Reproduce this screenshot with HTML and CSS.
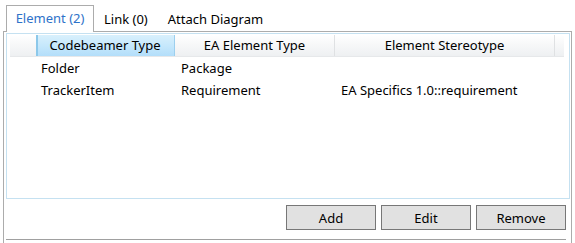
FILE: index.html
```html
<!DOCTYPE html>
<html>
<head>
<meta charset="utf-8">
<link rel="stylesheet" href="styles.css">
</head>
<body>
<div class="tabs">
  <div class="tab active">Element (2)</div>
  <div class="tab">Link (0)</div>
  <div class="tab">Attach Diagram</div>
</div>
<div class="panel">
  <div class="list">
    <div class="head">
      <div class="hc c0"></div>
      <div class="hc c1 sel">Codebeamer Type</div>
      <div class="hc c2">EA Element Type</div>
      <div class="hc c3">Element Stereotype</div>
      <div class="hc c4"></div>
    </div>
    <div class="row">
      <div class="c0"></div>
      <div class="cell c1">Folder</div>
      <div class="cell c2">Package</div>
      <div class="cell c3"></div>
    </div>
    <div class="row">
      <div class="c0"></div>
      <div class="cell c1">TrackerItem</div>
      <div class="cell c2">Requirement</div>
      <div class="cell c3">EA Specifics 1.0::requirement</div>
    </div>
  </div>
  <div class="buttons">
    <button class="btn">Add</button>
    <button class="btn">Edit</button>
    <button class="btn">Remove</button>
  </div>
  <div class="sep"></div>
</div>
</body>
</html>
```
FILE: styles.css
```css
html, body {
  margin: 0;
  padding: 0;
  background: #fff;
}
body {
  font-family: "Noto Sans", "Open Sans", sans-serif;
  font-size: 13px;
  color: #000;
  width: 575px;
  height: 243px;
  overflow: hidden;
}
.tabs {
  display: flex;
  align-items: flex-end;
  height: 31px;
  padding-left: 6px;
  position: relative;
  z-index: 1;
}
.tab {
  height: 24px;
  line-height: 24px;
  padding: 0 10px;
  white-space: nowrap;
}
.tab.active {
  height: 26px;
  line-height: 24px;
  margin-bottom: -1px;
  width: 86px;
  padding: 0;
  text-align: center;
  border: 1px solid #acacac;
  border-bottom: none;
  background: #fff;
  color: #2e72c9;
}
.tab:nth-child(2) { padding: 0 10px 0 10px; }
.panel {
  margin-left: 3px;
  width: 565px;
  height: 211px;
  border: 1px solid #acacac;
  border-bottom: none;
  padding: 1px 0 0 2px;
  box-sizing: content-box;
}
.list {
  width: 559px;
  height: 163px;
  border: 1px solid #c5e1f1;
  padding: 1px 0 0 3px;
  box-sizing: content-box;
  position: relative;
  overflow: hidden;
}
.head {
  display: flex;
  height: 22px;
  width: 554px;
  background: linear-gradient(#ffffff, #f6f7f8 50%, #eef0f2);
  border-bottom: 1px solid #e6e8ea;
  box-sizing: border-box;
}
.hc {
  text-align: center;
  line-height: 21px;
  border-right: 1px solid #dfe1e3;
  box-sizing: border-box;
  white-space: nowrap;
}
.c0 { width: 26px; flex: none; }
.c1 { width: 139px; flex: none; }
.c2 { width: 160px; flex: none; }
.c3 { width: 220px; flex: none; }
.c4 { flex: 1; border-right: none; }
.hc.c0 { border-right: none; }
.hc.sel {
  background: linear-gradient(#d9f0fc, #c6e8fc 50%, #b3defa);
  border-left: 2px solid #8cc8ea;
  border-right: 1px solid #9ccfee;
  padding-right: 2px;
}
.row {
  display: flex;
  height: 22px;
  line-height: 22px;
}
.cell {
  padding-left: 5px;
  white-space: nowrap;
  box-sizing: border-box;
}
.row .c2, .row .c3 { padding-left: 6px; }
.buttons {
  display: flex;
  justify-content: flex-end;
  gap: 5px;
  margin-top: 6px;
  padding-right: 5px;
  height: 25px;
}
.btn {
  width: 90px;
  height: 25px;
  margin: 0;
  padding: 0;
  font: inherit;
  color: #000;
  background: #e1e1e1;
  border: 1px solid #777;
  border-radius: 0;
}
.sep {
  margin-top: 9px;
  width: 560px;
  height: 1px;
  background: #a0a0a0;
}
```
